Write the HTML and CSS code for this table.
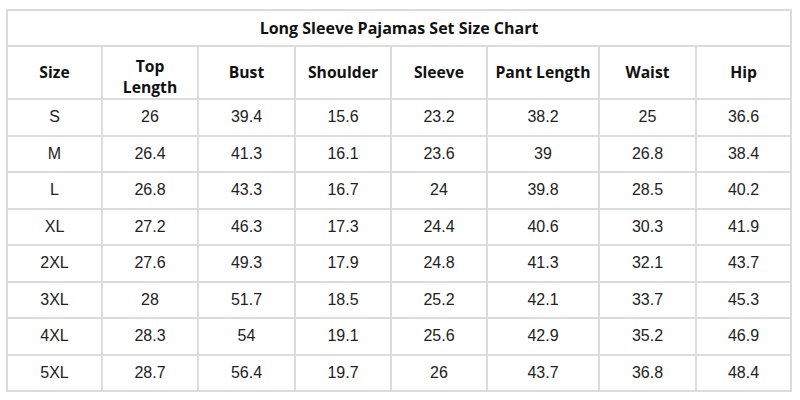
FILE: index.html
```html
<!DOCTYPE html>
<html>
<head>
<meta charset="utf-8">
<link rel="stylesheet" href="styles.css">
</head>
<body>
<div class="page">
<table class="chart">
  <colgroup>
    <col class="c1"><col class="c2"><col class="c3"><col class="c4"><col class="c5"><col class="c6"><col class="c7"><col class="c8">
  </colgroup>
  <thead>
    <tr class="title-row"><th colspan="8">Long Sleeve Pajamas Set Size Chart</th></tr>
    <tr class="head-row"><th>Size</th><th class="two-line">Top<br>Length</th><th>Bust</th><th>Shoulder</th><th>Sleeve</th><th>Pant Length</th><th>Waist</th><th>Hip</th></tr>
  </thead>
  <tbody>
    <tr><td>S</td><td>26</td><td>39.4</td><td>15.6</td><td>23.2</td><td>38.2</td><td>25</td><td>36.6</td></tr>
    <tr><td>M</td><td>26.4</td><td>41.3</td><td>16.1</td><td>23.6</td><td>39</td><td>26.8</td><td>38.4</td></tr>
    <tr><td>L</td><td>26.8</td><td>43.3</td><td>16.7</td><td>24</td><td>39.8</td><td>28.5</td><td>40.2</td></tr>
    <tr><td>XL</td><td>27.2</td><td>46.3</td><td>17.3</td><td>24.4</td><td>40.6</td><td>30.3</td><td>41.9</td></tr>
    <tr><td>2XL</td><td>27.6</td><td>49.3</td><td>17.9</td><td>24.8</td><td>41.3</td><td>32.1</td><td>43.7</td></tr>
    <tr><td>3XL</td><td>28</td><td>51.7</td><td>18.5</td><td>25.2</td><td>42.1</td><td>33.7</td><td>45.3</td></tr>
    <tr><td>4XL</td><td>28.3</td><td>54</td><td>19.1</td><td>25.6</td><td>42.9</td><td>35.2</td><td>46.9</td></tr>
    <tr><td>5XL</td><td>28.7</td><td>56.4</td><td>19.7</td><td>26</td><td>43.7</td><td>36.8</td><td>48.4</td></tr>
  </tbody>
</table>
</div>
</body>
</html>
```

FILE: styles.css
```css
html, body {
  margin: 0;
  padding: 0;
  background: #ffffff;
}
.page {
  padding: 9px 0 0 6px;
}
.chart {
  border-collapse: collapse;
  table-layout: fixed;
  width: 786px;
  color: #1f1f1f;
}
.chart th, .chart td {
  border: 2px solid #dcdcdc;
  text-align: center;
  padding: 0;
}
.c1 { width: 95px; }
.c2 { width: 96px; }
.c3 { width: 97px; }
.c4 { width: 96px; }
.c5 { width: 96px; }
.c6 { width: 112px; }
.c7 { width: 97px; }
.c8 { width: 95px; }
.title-row th {
  height: 34px;
  font-family: "Open Sans", sans-serif;
  font-weight: 700;
  font-size: 16px;
  color: #111;
}
.head-row th {
  height: 50px;
  font-family: "Open Sans", sans-serif;
  font-weight: 700;
  font-size: 15.7px;
  line-height: 21px;
  color: #111;
}
.head-row th.two-line {
  padding-top: 9px;
  height: 41px;
}
.chart td {
  height: 34.5px;
  font-family: "Liberation Sans", Arial, sans-serif;
  font-size: 16px;
  color: #222;
}
```
